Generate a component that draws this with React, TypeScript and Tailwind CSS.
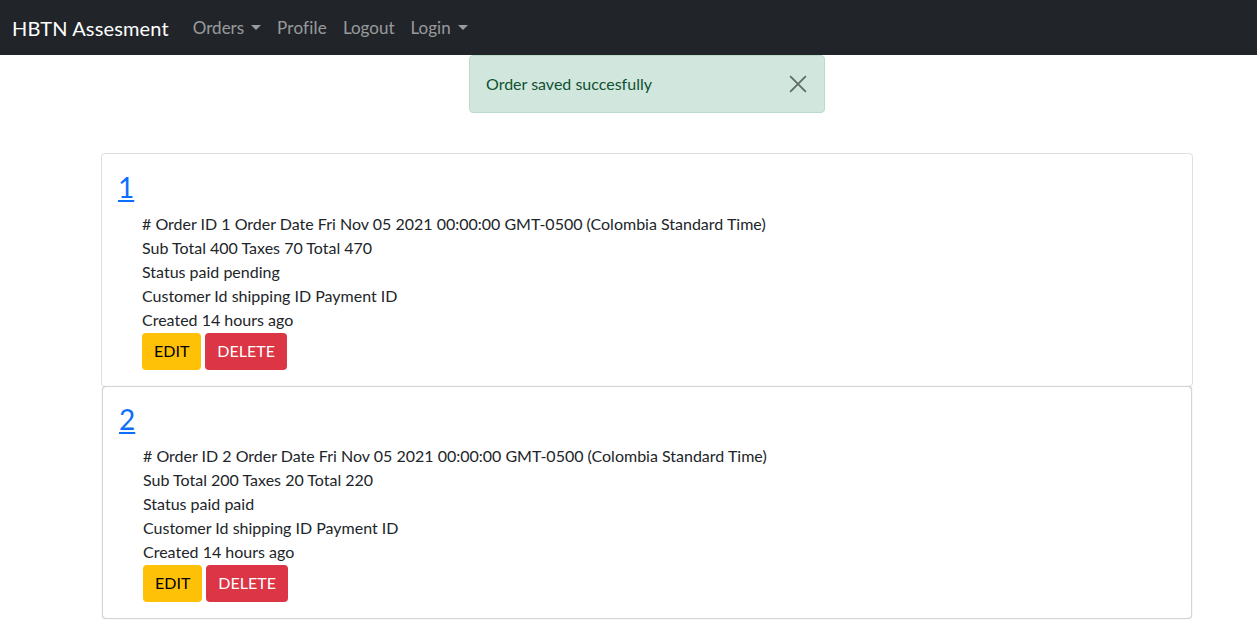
import React from "react";

const font = { fontFamily: "Lato, 'Noto Sans', sans-serif" };

function Caret() {
  return (
    <svg width="10" height="5" viewBox="0 0 10 5" className="ml-[7px] inline-block">
      <path d="M0 0 L10 0 L5 5 Z" fill="currentColor" />
    </svg>
  );
}

type Order = {
  id: number;
  sub: number;
  tax: number;
  total: number;
  status: string;
};

function Card({ o, second }: { o: Order; second?: boolean }) {
  return (
    <div
      className={
        second
          ? "ml-[102px] w-[1090px] border border-[#d4d4d4] rounded-[4px] bg-white shadow-[0_0_1px_rgba(0,0,0,0.25)] h-[233px] -mt-px"
          : "ml-[101px] w-[1092px] border border-[#dfdfdf] rounded-[4px] bg-white h-[234px]"
      }
    >
      <div className={second ? "pt-[15px] pl-[16px]" : "pt-[16px] pl-[16px]"}>
        <a className="text-[28px] leading-[34px] text-[#0d6efd] underline block w-fit">{o.id}</a>
        <div className="pl-[24px] mt-[8px] text-[16px] leading-[24px] text-[#212529]">
          <div>
            # Order ID {o.id} Order Date Fri Nov 05 2021 00:00:00 GMT-0500 (Colombia Standard Time)
          </div>
          <div>
            Sub Total {o.sub} Taxes {o.tax} Total {o.total}
          </div>
          <div>Status paid {o.status}</div>
          <div>Customer Id shipping ID Payment ID</div>
          <div>Created 14 hours ago</div>
          <div className="flex gap-[4px] mt-px">
            <button className="h-[37px] px-[12px] pb-[2px] rounded-[4px] bg-[#ffc107] text-black text-[16px]">EDIT</button>
            <button className="h-[37px] px-[12px] pb-[2px] rounded-[4px] bg-[#dc3545] text-white text-[16px]">DELETE</button>
          </div>
        </div>
      </div>
    </div>
  );
}

export default function App() {
  const orders: Order[] = [
    { id: 1, sub: 400, tax: 70, total: 470, status: "pending" },
    { id: 2, sub: 200, tax: 20, total: 220, status: "paid" },
  ];
  return (
    <div className="w-[1257px] h-[620px] bg-white overflow-hidden" style={font}>
      <nav className="h-[55px] bg-[#212529] flex items-center pl-[12px]">
        <span className="text-[20px] text-white mr-[16px] tracking-[0.15px]">HBTN Assesment</span>
        <div className="flex items-center text-[17px] text-[rgba(255,255,255,0.55)]">
          <span className="px-[8px] flex items-center">
            Orders
            <Caret />
          </span>
          <span className="px-[8px] tracking-[0.2px]">Profile</span>
          <span className="px-[8px]">Logout</span>
          <span className="px-[8px] flex items-center">
            Login
            <Caret />
          </span>
        </div>
      </nav>
      <div className="flex justify-center pl-[37px]">
        <div className="w-[356px] h-[58px] bg-[#d1e7dd] border border-[#badbcc] rounded-[4px] text-[#0f5132] text-[16px] flex items-center justify-between pl-[16px] pr-[16px]">
          <span>Order saved succesfully</span>
          <svg width="18" height="18" viewBox="0 0 16 16" className="mr-[1px]">
            <path d="M1 1 L15 15 M15 1 L1 15" stroke="#5f6b64" strokeWidth="1.6" />
          </svg>
        </div>
      </div>
      <div className="mt-[40px]">
        <Card o={orders[0]} />
        <Card o={orders[1]} second />
      </div>
    </div>
  );
}
